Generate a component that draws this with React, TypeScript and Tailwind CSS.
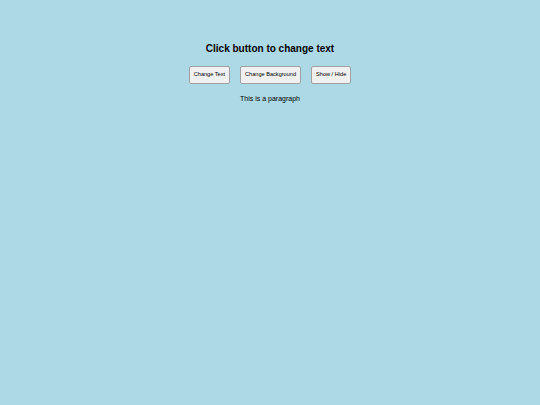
export default function App() {
  return (
    <div className="min-h-[405px] w-full bg-[#add8e6] text-black" style={{ fontFamily: '"Liberation Sans", Arial, sans-serif' }}>
      <div className="flex flex-col items-center pt-[43px]">
        <h2 className="text-[10px] font-bold leading-[12px]">Click button to change text</h2>
        <div className="mt-[11px] flex items-center gap-[10px]">
          <button className="h-[17.5px] rounded-[2px] border border-[#a0a0a0] bg-[#f0f0f0] px-[4px] text-[5.6px] leading-none">Change Text</button>
          <button className="h-[17.5px] rounded-[2px] border border-[#a0a0a0] bg-[#f0f0f0] px-[4px] text-[5.6px] leading-none">Change Background</button>
          <button className="h-[17.5px] rounded-[2px] border border-[#a0a0a0] bg-[#f0f0f0] px-[4px] text-[5.6px] leading-none">Show / Hide</button>
        </div>
        <p className="mt-[11px] text-[7px] leading-[8px]">This is a paragraph</p>
      </div>
    </div>
  );
}
